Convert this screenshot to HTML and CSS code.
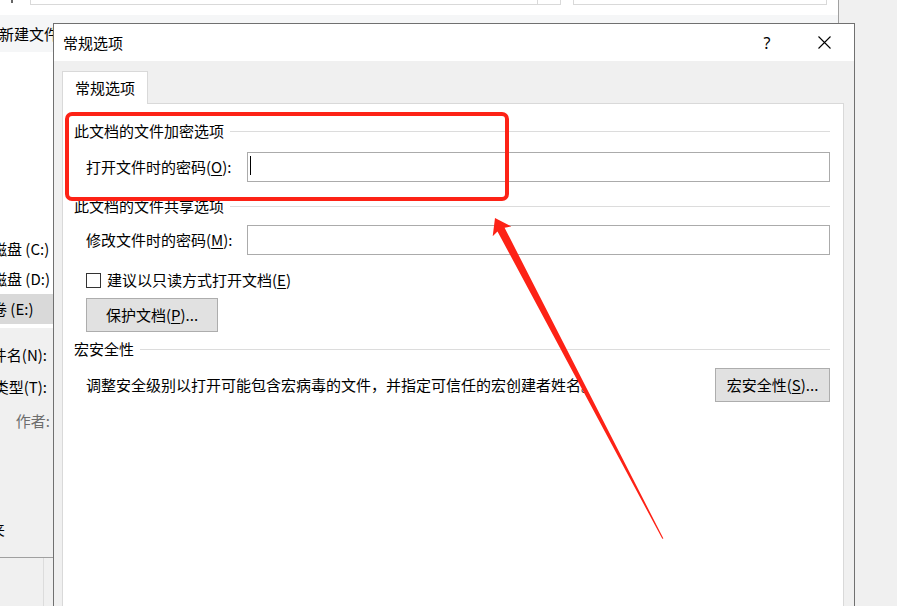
FILE: index.html
```html
<!DOCTYPE html>
<html lang="zh-CN">
<head>
<meta charset="utf-8">
<title>常规选项</title>
<link rel="stylesheet" href="styles.css">
</head>
<body>
<div class="bgwin">
  <div class="topbar">
    <span class="mark"></span>
    <span class="tbox tbox-a"></span>
    <span class="tbox tbox-b"></span>
    <span class="tbox tbox-c"></span>
  </div>
  <div class="toolbar"><span class="newfolder">新建文件夹</span></div>
  <div class="nav">
    <div class="nav-row"><span class="nav-text">本地磁盘 (C:)</span></div>
    <div class="nav-row"><span class="nav-text">本地磁盘 (D:)</span></div>
    <div class="nav-row selected"><span class="nav-text nav-e">新加卷 (E:)</span></div>
  </div>
  <div class="form">
    <div class="form-row r1"><span>文件名(N):</span></div>
    <div class="form-row r2"><span>保存类型(T):</span></div>
    <div class="form-row r3 muted"><span>作者:</span></div>
    <div class="form-row r4"><span>隐藏文件夹</span></div>
    <div class="footer"><div class="footer-cell"></div></div>
  </div>
</div>

<div class="dialog">
  <div class="titlebar">
    <span class="title">常规选项</span>
    <span class="help">?</span>
    <span class="close">
      <svg width="13" height="13" viewBox="0 0 13 13"><path d="M0.5 0.5 L12.5 12.5 M12.5 0.5 L0.5 12.5" stroke="#000" stroke-width="1.1" fill="none"/></svg>
    </span>
  </div>
  <div class="dlg-body">
    <div class="tabs"><div class="tab">常规选项</div></div>
    <div class="panel">
      <div class="group-title g1"><span>此文档的文件加密选项</span><span class="rule"></span></div>
      <div class="field-row f1">
        <span class="field-label">打开文件时的密码(<u>O</u>):</span>
        <div class="field-input"><span class="caret"></span></div>
      </div>
      <div class="group-title g2"><span>此文档的文件共享选项</span><span class="rule"></span></div>
      <div class="field-row f2">
        <span class="field-label">修改文件时的密码(<u>M</u>):</span>
        <div class="field-input"></div>
      </div>
      <div class="check-row">
        <span class="checkbox"></span>
        <span>建议以只读方式打开文档(<u>E</u>)</span>
      </div>
      <div class="btn btn-protect">保护文档(<u>P</u>)...</div>
      <div class="group-title g3"><span>宏安全性</span><span class="rule"></span></div>
      <div class="macro-row">
        <span class="macro-desc">调整安全级别以打开可能包含宏病毒的文件，并指定可信任的宏创建者姓名。</span>
        <div class="btn btn-macro">宏安全性(<u>S</u>)...</div>
      </div>
    </div>
  </div>
</div>

<div class="highlight"></div>
<svg class="arrow" width="897" height="606" viewBox="0 0 897 606">
  <polygon points="495,218 511.3,226.4 504.6,227.7 663.4,538.5 662.3,538.8 497.5,231.4 492.7,236.2" fill="#fd2216"/>
</svg>
</body>
</html>
```

FILE: styles.css
```css
* { box-sizing: border-box; }
html, body { margin: 0; padding: 0; }
body {
  width: 897px;
  height: 606px;
  overflow: hidden;
  position: relative;
  background: #f0f0f0;
  font-family: "Noto Sans CJK SC", "Noto Sans", sans-serif;
  font-size: 15px;
  line-height: 20px;
  color: #000;
}
u { text-decoration: underline; text-underline-offset: 2px; }

/* background window */
.bgwin {
  width: 839px;
  height: 606px;
  border-right: 1px solid #a0a0a0;
  background: #fff;
  display: flex;
  flex-direction: column;
}
.topbar { height: 15px; flex-shrink: 0; display: flex; align-items: flex-start; background: #fff; }
.mark { width: 2px; height: 3px; margin-left: 11px; background: #666; }
.tbox { height: 6px; margin-top: -1px; border: 1px solid #d9d9d9; border-top: none; }
.tbox-a { margin-left: 17px; width: 508px; }
.tbox-b { width: 23px; border-left: none; }
.tbox-c { margin-left: 12px; width: 254px; }
.toolbar {
  height: 37px;
  flex-shrink: 0;
  background: #f5f6f7;
  display: flex;
  align-items: center;
  white-space: nowrap;
}
.newfolder { margin-left: -1px; }
.nav {
  height: 276px;
  flex-shrink: 0;
  background: #fff;
  padding: 182px 0 4px;
  display: flex;
  flex-direction: column;
}
.nav-row { height: 30px; display: flex; align-items: center; white-space: nowrap; overflow: hidden; }
.nav-row.selected { background: #d9d9d9; }
.nav-text { margin-left: -38px; }
.nav-e { margin-left: -38px; }
.form { flex: 1; background: #f0f0f0; display: flex; flex-direction: column; }
.form-row {
  width: 47px;
  height: 20px;
  display: flex;
  justify-content: flex-end;
  white-space: nowrap;
}
.r1 { margin-top: 17px; }
.r2 { margin-top: 12px; }
.r3 { margin-top: 14px; width: 50px; }
.r4 { margin-top: 88px; width: 5px; }
.muted { color: #6d6d6d; }
.footer { flex: 1; margin-top: 18px; border-top: 1px solid #a0a0a0; display: flex; }
.footer-cell { width: 44px; border-right: 1px solid #dcdcdc; }

/* dialog */
.dialog {
  position: absolute;
  left: 53px;
  top: 23px;
  width: 802px;
  height: 600px;
  border: 1px solid #707070;
  background: #f0f0f0;
  display: flex;
  flex-direction: column;
}
.titlebar {
  height: 37px;
  flex-shrink: 0;
  background: #fff;
  display: flex;
  align-items: center;
  padding: 0 20px 0 9px;
}
.title { flex: 1; }
.help { width: 20px; text-align: center; font-family: "Noto Sans", sans-serif; font-size: 16px; }
.close { width: 20px; margin-left: 37px; display: flex; justify-content: center; align-items: center; height: 13px; }
.close svg { display: block; }
.dlg-body {
  flex: 1;
  padding: 10px 10px 0 8px;
  display: flex;
  flex-direction: column;
}
.tabs { display: flex; }
.tab {
  width: 86px;
  height: 33px;
  border: 1px solid #d9d9d9;
  border-bottom: none;
  background: #fff;
  margin-bottom: -1px;
  position: relative;
  z-index: 1;
  display: flex;
  align-items: center;
  padding-left: 12px;
}
.panel {
  flex: 1;
  border: 1px solid #d9d9d9;
  background: #fff;
  padding: 0 13px 0 11px;
  display: flex;
  flex-direction: column;
}
.group-title { height: 20px; display: flex; align-items: center; white-space: nowrap; }
.rule { flex: 1; height: 1px; background: #dcdcdc; margin-left: 6px; }
.g1 { margin-top: 17px; }
.g2 { margin-top: 14px; }
.g3 { margin-top: 7px; }
.field-row { display: flex; align-items: center; padding-left: 12px; white-space: nowrap; }
.f1 { margin-top: 11px; }
.f2 { margin-top: 9px; }
.field-label { width: 161px; }
.field-input {
  flex: 1;
  height: 30px;
  border: 1px solid #ababab;
  background: #fff;
  padding: 3px 0 0 2px;
}
.caret { display: block; width: 1px; height: 19px; background: #000; }
.check-row { margin-top: 15px; height: 20px; display: flex; align-items: center; padding-left: 12px; }
.checkbox { width: 15px; height: 15px; border: 1px solid #333; background: #fff; margin-right: 6px; }
.btn {
  height: 34px;
  background: #e1e1e1;
  border: 1px solid #adadad;
  display: flex;
  align-items: center;
  justify-content: center;
  white-space: nowrap;
}
.btn-protect { width: 132px; margin: 8px 0 0 12px; }
.macro-row { margin-top: 9px; display: flex; align-items: center; padding-left: 12px; }
.macro-desc { flex: 1; white-space: nowrap; }
.btn-macro { width: 115px; }

/* annotations */
.highlight {
  position: absolute;
  left: 65px;
  top: 112px;
  width: 444px;
  height: 89px;
  border: 4px solid #fd2216;
  border-radius: 7px;
}
.arrow { position: absolute; left: 0; top: 0; pointer-events: none; }
```
